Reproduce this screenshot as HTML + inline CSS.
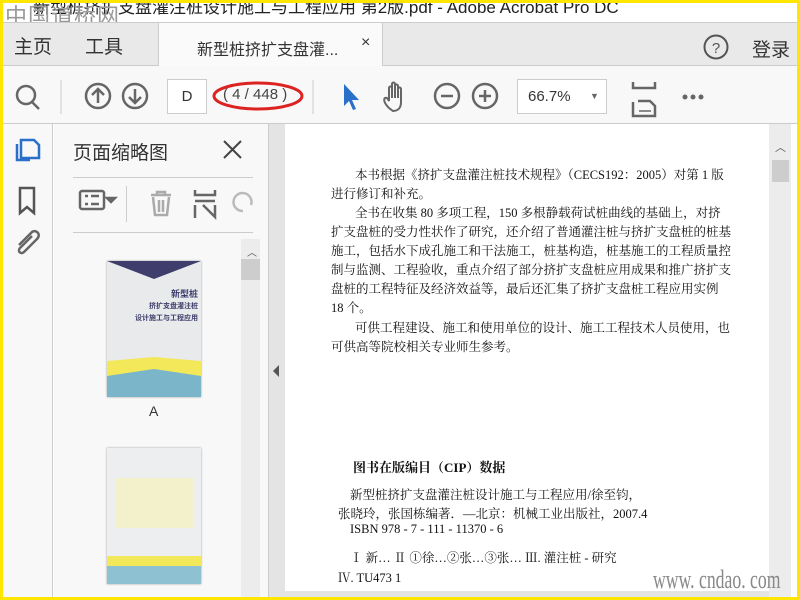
<!DOCTYPE html>
<html><head><meta charset="utf-8"><style>
*{margin:0;padding:0;box-sizing:border-box}
body{width:800px;height:600px;overflow:hidden;background:#ffe600;position:relative;font-family:"Liberation Sans","Noto Sans CJK SC",sans-serif}
.a{position:absolute}
.ser{font-family:"Liberation Serif","Noto Serif CJK SC",serif;color:#111;font-size:12.5px;white-space:nowrap}
</style></head><body>
<div class="a" style="left:3px;top:3px;right:3px;bottom:3px;background:#fff;overflow:hidden">
<!-- title -->
<div class="a" style="top:-10px;font-size:17px;color:#222;white-space:nowrap;left:30px">新型桩挤扩支盘灌注桩设计施工与工程应用 第2版.pdf - Adobe Acrobat Pro DC</div>
<div class="a" style="left:2px;top:-4px;font-size:22px;color:#999;letter-spacing:1px">中国道桥网</div>
<!-- tabbar -->
<div class="a" style="left:0;top:19px;width:794px;height:44px;background:#e9e9e9;border-top:1px solid #ccc;border-bottom:1px solid #ccc"></div>
<div class="a" style="left:155px;top:20px;width:225px;height:43px;background:#fafafa;border-left:1px solid #ccc;border-right:1px solid #ccc"></div>
<div class="a" style="left:11px;top:29px;font-size:19px;color:#333">主页</div>
<div class="a" style="left:82px;top:29px;font-size:19px;color:#333">工具</div>
<div class="a" style="left:194px;top:33px;font-size:16px;color:#333">新型桩挤扩支盘灌...</div>
<div class="a" style="left:358px;top:31px;font-size:16px;color:#333">×</div>
<svg class="a" style="left:700px;top:30px" width="28" height="28"><circle cx="13" cy="14" r="11.5" fill="none" stroke="#555" stroke-width="2"/><text x="13" y="20" font-size="15" text-anchor="middle" fill="#555" font-family="Liberation Sans">?</text></svg>
<div class="a" style="left:749px;top:32px;font-size:19px;color:#333">登录</div>
<!-- toolbar -->
<div class="a" style="left:0;top:63px;width:794px;height:58px;background:#f8f8f8;border-bottom:1px solid #ccc"></div>
<svg class="a" style="left:0;top:63px" width="794" height="58" fill="none" stroke="#666" stroke-width="2.5">
<circle cx="23" cy="29" r="9"/><line x1="29" y1="36" x2="36" y2="43"/>
<line x1="58" y1="14" x2="58" y2="48" stroke="#ccc" stroke-width="1"/>
<circle cx="95" cy="30" r="12"/><path d="M95 37V23M89 29l6-6 6 6"/>
<circle cx="132" cy="30" r="12"/><path d="M132 23v14M126 31l6 6 6-6"/>
<line x1="310" y1="14" x2="310" y2="48" stroke="#ccc" stroke-width="1"/>
<path d="M341 18v22l5-5 4 9 3-1-4-9 7 0z" fill="#2a6fc9" stroke="none"/>
<path d="M386 42c-4-4-6-8-4-10 2-1 3 1 4 3V22c0-2 3-2 3 0v10-14c0-2 3-2 3 0v14-12c0-2 3-2 3 0v12-9c0-2 3-2 3 0v13c0 6-3 9-8 9z" stroke-width="2"/>
<circle cx="444" cy="30" r="12"/><line x1="438" y1="30" x2="450" y2="30"/>
<circle cx="482" cy="30" r="12"/><path d="M476 30h12M482 24v12"/>
<path d="M630 16v6h22v-6M630 36v14h22V40l-5-5h-12" stroke-width="2.5"/>
<path d="M636 45h12" stroke-width="1.5"/>
<circle cx="682" cy="31" r="2.5" fill="#666" stroke="none"/><circle cx="690" cy="31" r="2.5" fill="#666" stroke="none"/><circle cx="698" cy="31" r="2.5" fill="#666" stroke="none"/>
</svg>
<div class="a" style="left:164px;top:76px;width:40px;height:35px;background:#fff;border:1px solid #ccc;font-size:15px;color:#333;text-align:center;line-height:33px">D</div>
<div class="a" style="left:220px;top:83px;font-size:15px;color:#444">( 4 / 448 )</div>
<svg class="a" style="left:205px;top:74px" width="100" height="38"><ellipse cx="50" cy="19" rx="44" ry="13" fill="none" stroke="#d22" stroke-width="3"/></svg>
<div class="a" style="left:514px;top:76px;width:90px;height:35px;background:#fff;border:1px solid #ccc;font-size:15px;color:#333;line-height:33px;padding-left:10px">66.7%<span style="position:absolute;left:72px;font-size:9px;color:#666">▼</span></div>
<!-- left rail -->
<div class="a" style="left:0;top:121px;width:50px;height:473px;background:#f8f8f8;border-right:1px solid #ccc"></div>
<svg class="a" style="left:0;top:121px" width="50" height="150" fill="none" stroke-width="2.5">
<path d="M18 16h13l5 5v13H18z M14 20v16h13" stroke="#2a6fc9"/>
<path d="M17 64v25l7-6 7 6V64z" stroke="#555"/>
<path d="M29 112l-12 12c-3 3 1 7 4 4l13-13c5-5-2-11-6-6l-12 12" stroke="#666"/>
</svg>
<!-- thumbnails panel -->
<div class="a" style="left:51px;top:121px;width:214px;height:473px;background:#f8f8f8"></div>
<div class="a" style="left:70px;top:135px;font-size:19px;color:#333">页面缩略图</div>
<svg class="a" style="left:219px;top:136px" width="22" height="22"><path d="M2 2l17 17M19 2L2 19" stroke="#444" stroke-width="2"/></svg>
<div class="a" style="left:70px;top:174px;width:180px;border-top:1px solid #ccc"></div>
<div class="a" style="left:70px;top:229px;width:180px;border-top:1px solid #ccc"></div>
<div class="a" style="left:123px;top:183px;height:36px;border-left:1px solid #ccc"></div>
<svg class="a" style="left:70px;top:180px" width="180" height="45" fill="none" stroke="#666" stroke-width="2.5">
<rect x="7" y="8" width="24" height="18" rx="2"/><path d="M12 13h3M12 21h3M18 13h8M18 21h8"/><path d="M34 15l4 4 4-4z" fill="#666"/>
<path d="M78 12h20M84 12v-3h8v3M80 14l2 18h12l2-18M86 17v12M90 17v12" stroke="#aaa"/>
<path d="M122 7v5h20V7M122 18h20M122 22v13M130 22l12 12V22" stroke-width="2.5"/>
<path d="M170 28a9 9 0 1 1 8 -6" stroke="#bbb"/>
</svg>
<!-- thumb scrollbar -->
<div class="a" style="left:238px;top:236px;width:19px;height:358px;background:#ececec"></div>
<div class="a" style="left:238px;top:256px;width:19px;height:21px;background:#cdcdcd"></div>
<div class="a" style="left:244px;top:241px;font-size:10px;color:#555">︿</div>
<!-- thumb A -->
<div class="a" style="left:104px;top:258px;width:94px;height:136px;background:#e8eaec;overflow:hidden;box-shadow:0 0 2px #999">
<div class="a" style="left:0;top:0;width:94px;height:18px;background:#3e3d6b;clip-path:polygon(0 0,100% 0,50% 100%)"></div>
<div class="a" style="left:0;top:96px;width:94px;height:40px;background:#f2e85a;clip-path:polygon(0 10%,50% 0,100% 10%,100% 100%,0 100%)"></div>
<div class="a" style="left:0;top:108px;width:94px;height:28px;background:#7ab5c9;clip-path:polygon(0 25%,50% 0,100% 25%,100% 100%,0 100%)"></div>
<div class="a" style="right:3px;top:28px;font-size:9px;font-weight:bold;color:#3e3d6b;text-align:right;line-height:11px">新型桩<br><span style="font-size:7px">挤扩支盘灌注桩<br>设计施工与工程应用</span></div>
</div>
<div class="a" style="left:146px;top:400px;font-size:14px;color:#333">A</div>
<!-- thumb B -->
<div class="a" style="left:104px;top:445px;width:94px;height:136px;background:#eceef0;overflow:hidden;box-shadow:0 0 2px #999">
<div class="a" style="left:8px;top:30px;width:78px;height:50px;background:#f3f0cc"></div>
<div class="a" style="left:0;top:108px;width:94px;height:10px;background:#f2e85a"></div>
<div class="a" style="left:0;top:118px;width:94px;height:18px;background:#8ec2d2"></div>
</div>
<!-- collapse strip -->
<div class="a" style="left:265px;top:121px;width:17px;height:473px;background:#e4e4e4;border-left:1px solid #ccc"></div>
<div class="a" style="left:270px;top:362px;width:0;height:0;border-top:6px solid transparent;border-bottom:6px solid transparent;border-right:6px solid #555"></div>
<!-- page area -->
<div class="a" style="left:282px;top:121px;width:484px;height:473px;background:#fff"></div>
<div class="a" style="left:766px;top:121px;width:22px;height:473px;background:#ececec"></div>
<div class="a" style="left:769px;top:157px;width:17px;height:22px;background:#cdcdcd"></div>
<div class="a" style="left:772px;top:136px;font-size:11px;color:#555">︿</div>
<div class="a" style="left:282px;top:588px;width:484px;height:6px;background:#e4e4e4"></div>
<div class="a ser" style="left:352px;top:162px">本书根据《挤扩支盘灌注桩技术规程》（CECS192：2005）对第 1 版</div>
<div class="a ser" style="left:328px;top:181px">进行修订和补充。</div>
<div class="a ser" style="left:352px;top:200px">全书在收集 80 多项工程，150 多根静载荷试桩曲线的基础上，对挤</div>
<div class="a ser" style="left:328px;top:219px">扩支盘桩的受力性状作了研究，还介绍了普通灌注桩与挤扩支盘桩的桩基</div>
<div class="a ser" style="left:328px;top:238px">施工，包括水下成孔施工和干法施工，桩基构造，桩基施工的工程质量控</div>
<div class="a ser" style="left:328px;top:257px">制与监测、工程验收，重点介绍了部分挤扩支盘桩应用成果和推广挤扩支</div>
<div class="a ser" style="left:328px;top:276px">盘桩的工程特征及经济效益等，最后还汇集了挤扩支盘桩工程应用实例</div>
<div class="a ser" style="left:328px;top:295px">18 个。</div>
<div class="a ser" style="left:352px;top:315px">可供工程建设、施工和使用单位的设计、施工工程技术人员使用，也</div>
<div class="a ser" style="left:328px;top:334px">可供高等院校相关专业师生参考。</div>
<div class="a ser" style="left:350px;top:454px;font-weight:bold;font-size:13px">图书在版编目（CIP）数据</div>
<div class="a ser" style="left:347px;top:482px">新型桩挤扩支盘灌注桩设计施工与工程应用/徐至钧，</div>
<div class="a ser" style="left:335px;top:501px">张晓玲，张国栋编著．—北京：机械工业出版社，2007.4</div>
<div class="a ser" style="left:347px;top:519px">ISBN 978 - 7 - 111 - 11370 - 6</div>
<div class="a ser" style="left:347px;top:545px">Ⅰ 新… Ⅱ ①徐…②张…③张… Ⅲ. 灌注桩 - 研究</div>
<div class="a ser" style="left:335px;top:565px">Ⅳ. TU473 1</div>
<div class="a" style="left:650px;top:562px;font-size:26px;color:#888;font-family:'Liberation Serif',serif;transform:scaleX(0.68);transform-origin:left;white-space:nowrap">www. cndao. com</div>
</div>
</body></html>
